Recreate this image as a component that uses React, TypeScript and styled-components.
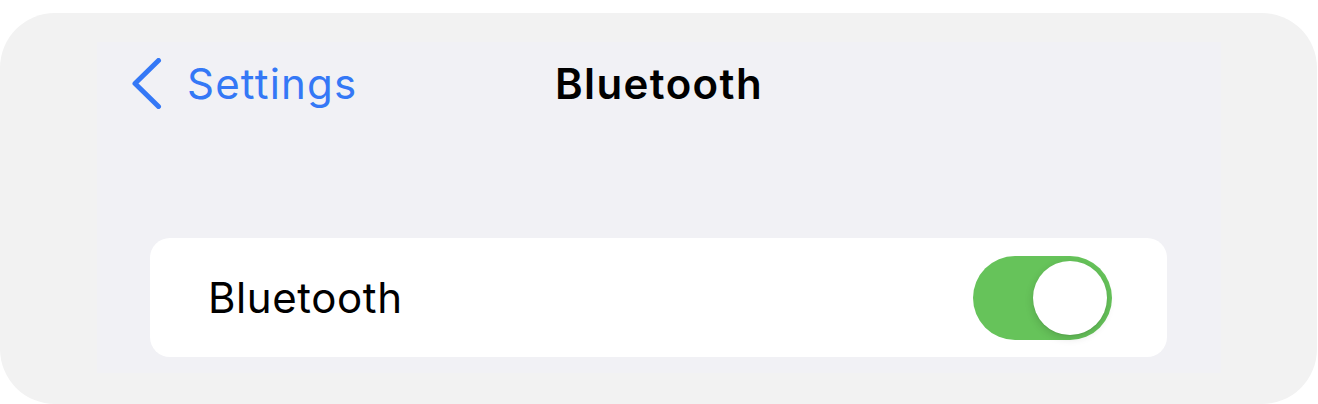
import React, { useState } from 'react'
import styled, { createGlobalStyle } from 'styled-components'

const GlobalStyle = createGlobalStyle`
  body {
    margin: 0;
    background: #ffffff;
    font-family: Inter, "Liberation Sans", sans-serif;
    -webkit-font-smoothing: antialiased;
  }
`

const Frame = styled.div`
  margin-top: 13px;
  width: 1317px;
  height: 391px;
  border-radius: 55px;
  background: #f2f2f2;
  padding-top: 29px;
  padding-left: 97px;
  box-sizing: border-box;
`

const Screen = styled.div`
  width: 1124px;
  height: 331px;
  background: #f1f1f5;
  display: flex;
  flex-direction: column;
`

const NavBar = styled.div`
  height: 82px;
  display: grid;
  grid-template-columns: 1fr auto 1fr;
  align-items: center;
  padding: 0 35px;
`

const BackButton = styled.button`
  justify-self: start;
  display: flex;
  align-items: center;
  gap: 25px;
  border: 0;
  padding: 0;
  background: none;
  color: #3478f6;
  font-family: inherit;
  font-size: 42px;
  letter-spacing: 1.2px;
  cursor: pointer;
`

const Title = styled.div`
  font-size: 42px;
  font-weight: 600;
  letter-spacing: 1.4px;
  color: #000;
`

const Group = styled.div`
  margin: 114px 54px 0 53px;
  height: 119px;
  border-radius: 20px;
  background: #ffffff;
  display: flex;
  align-items: center;
  justify-content: space-between;
  padding: 0 55px 0 58px;
`

const Label = styled.span`
  font-size: 42px;
  letter-spacing: 0.6px;
  color: #000;
`

const Switch = styled.button<{ on: boolean }>`
  width: 139px;
  height: 84px;
  border-radius: 42px;
  border: 0;
  padding: 5px;
  background: ${p => (p.on ? '#66c35a' : '#e9e9ea')};
  display: flex;
  justify-content: ${p => (p.on ? 'flex-end' : 'flex-start')};
  cursor: pointer;
  box-sizing: border-box;
`

const Thumb = styled.span`
  width: 74px;
  height: 74px;
  border-radius: 50%;
  background: #ffffff;
  box-shadow: 0 3px 8px rgba(0, 0, 0, 0.15), 0 1px 1px rgba(0, 0, 0, 0.06);
`

const Chevron = () => (
  <svg width="30" height="51" viewBox="0 0 30 51" fill="none">
    <polyline
      points="26.5,2.5 3,25.5 26.5,48.5"
      stroke="#3478f6"
      strokeWidth="5"
      strokeLinecap="round"
      strokeLinejoin="round"
    />
  </svg>
)

export default function App() {
  const [on, setOn] = useState(true)
  return (
    <>
      <GlobalStyle />
      <Frame>
        <Screen>
          <NavBar>
            <BackButton>
              <Chevron />
              Settings
            </BackButton>
            <Title>Bluetooth</Title>
            <div />
          </NavBar>
          <Group>
            <Label>Bluetooth</Label>
            <Switch on={on} onClick={() => setOn(!on)}>
              <Thumb />
            </Switch>
          </Group>
        </Screen>
      </Frame>
    </>
  )
}
